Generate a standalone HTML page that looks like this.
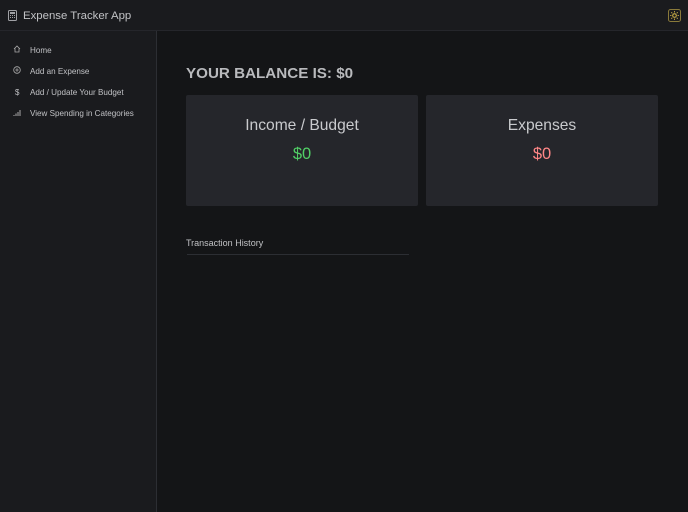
<!DOCTYPE html>
<html><head><style>
*{box-sizing:border-box;margin:0;padding:0}
body{width:688px;height:512px;background:#141517;font-family:"Liberation Sans",sans-serif;color:#c1c2c5;overflow:hidden;position:relative}
.hdr{position:absolute;left:0;top:0;width:688px;height:31px;background:#1a1b1e;border-bottom:1px solid #25262b}
.hdr .t{position:absolute;left:23px;top:9.5px;font-size:11.4px;color:#c1c2c5}
.side{position:absolute;left:0;top:31px;width:157px;height:481px;background:#1a1b1e;border-right:1px solid #2c2e33}
.item{position:absolute;left:30px;font-size:8.1px;color:#c1c2c5}
.ic{position:absolute;left:13px;width:8px;height:8px}
h1{position:absolute;left:186px;top:65px;font-size:15.2px;font-weight:bold;color:#b9babd}
.card{position:absolute;top:95px;width:232px;height:111px;background:#25262b;border-radius:2px;text-align:center}
.card .a{margin-top:22px;font-size:15.6px;color:#c9cacd}
.card .b{margin-top:10px;font-size:16.5px}
.th{position:absolute;left:186px;top:238px;font-size:9px;color:#c1c2c5}
.line{position:absolute;left:187px;top:254px;width:222px;height:1px;background:#2c2e33}
</style></head><body>
<div class="hdr">
<svg style="position:absolute;left:8px;top:10px" width="9" height="11" viewBox="0 0 9 11"><rect x="0.5" y="0.5" width="8" height="10" rx="1" fill="none" stroke="#a0a1a5"/><rect x="2" y="2" width="5" height="2" fill="#a0a1a5"/><g fill="#a0a1a5"><rect x="2" y="5" width="1" height="1"/><rect x="4" y="5" width="1" height="1"/><rect x="6" y="5" width="1" height="1"/><rect x="2" y="7" width="1" height="1"/><rect x="4" y="7" width="1" height="1"/><rect x="6" y="7" width="1" height="1"/></g></svg>
<div class="t">Expense Tracker App</div>
<svg style="position:absolute;left:668px;top:9px" width="13" height="13" viewBox="0 0 13 13"><rect x="0.5" y="0.5" width="12" height="12" rx="2" fill="none" stroke="#8a7a3a"/><circle cx="6.5" cy="6.5" r="1.8" fill="none" stroke="#d6b84a"/><g stroke="#d6b84a" stroke-width="0.8"><path d="M6.5 2v1.5M6.5 9.5V11M2 6.5h1.5M9.5 6.5H11M3.3 3.3l1 1M8.7 8.7l1 1M3.3 9.7l1-1M8.7 4.3l1-1"/></g></svg>
</div>
<div class="side">
<svg class="ic" style="top:14px" viewBox="0 0 8 8"><path d="M1 4L4 1L7 4M2 3.5V7H6V3.5" fill="none" stroke="#aaa" stroke-width="0.8"/></svg>
<div class="item" style="top:14.5px">Home</div>
<svg class="ic" style="top:35px" viewBox="0 0 8 8"><circle cx="4" cy="4" r="3.3" fill="none" stroke="#aaa" stroke-width="0.8"/><path d="M4 2.3v3.4M2.3 4h3.4" stroke="#aaa" stroke-width="0.8"/></svg>
<div class="item" style="top:35.5px">Add an Expense</div>
<div class="item" style="top:57px;left:15px;font-size:8px">$</div>
<div class="item" style="top:57px">Add / Update Your Budget</div>
<svg class="ic" style="top:78px" viewBox="0 0 8 8"><path d="M1 7V6M3 7V4.5M5 7V3M7 7V1" stroke="#aaa" stroke-width="1"/></svg>
<div class="item" style="top:78px">View Spending in Categories</div>
</div>
<h1>YOUR BALANCE IS: $0</h1>
<div class="card" style="left:186px"><div class="a">Income / Budget</div><div class="b" style="color:#51cf66">$0</div></div>
<div class="card" style="left:426px"><div class="a">Expenses</div><div class="b" style="color:#ff8787">$0</div></div>
<div class="th">Transaction History</div>
<div class="line"></div>
</body></html>
